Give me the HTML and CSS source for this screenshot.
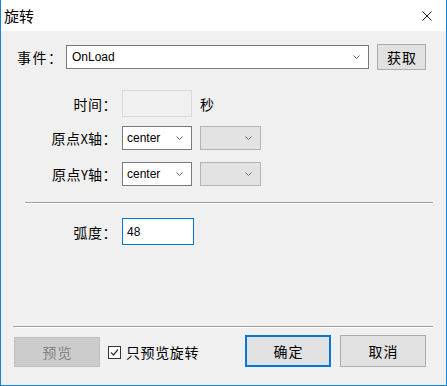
FILE: index.html
```html
<!DOCTYPE html>
<html lang="zh-CN">
<head>
<meta charset="utf-8">
<title>旋转</title>
<link rel="stylesheet" href="styles.css">
</head>
<body>
<div class="window">
  <div class="titlebar">
    <span class="title">旋转</span>
    <svg class="close" width="10" height="10" viewBox="0 0 10 10"><path d="M0.5 0.5L9.5 9.5M9.5 0.5L0.5 9.5" stroke="#1a1a1a" stroke-width="1" fill="none"/></svg>
  </div>
  <div class="content">
    <div class="row-event">
      <span class="lbl-event">事件：</span>
      <div class="combo combo-event">
        <span class="val">OnLoad</span>
        <svg class="chev" width="7" height="4" viewBox="0 0 7 4"><path d="M0.5 0.5L3.5 3.5L6.5 0.5" stroke="#606060" fill="none"/></svg>
      </div>
      <div class="btn btn-fetch">获取</div>
    </div>

    <div class="row row-time">
      <span class="lbl">时间：</span>
      <div class="input input-disabled"></div>
      <span class="unit">秒</span>
    </div>

    <div class="row row-x">
      <span class="lbl">原点<span class="latin">X</span>轴：</span>
      <div class="combo combo-small">
        <span class="val">center</span>
        <svg class="chev" width="7" height="4" viewBox="0 0 7 4"><path d="M0.5 0.5L3.5 3.5L6.5 0.5" stroke="#606060" fill="none"/></svg>
      </div>
      <div class="combo combo-disabled">
        <svg class="chev" width="7" height="4" viewBox="0 0 7 4"><path d="M0.5 0.5L3.5 3.5L6.5 0.5" stroke="#707070" fill="none"/></svg>
      </div>
    </div>

    <div class="row row-y">
      <span class="lbl">原点<span class="latin">Y</span>轴：</span>
      <div class="combo combo-small">
        <span class="val">center</span>
        <svg class="chev" width="7" height="4" viewBox="0 0 7 4"><path d="M0.5 0.5L3.5 3.5L6.5 0.5" stroke="#606060" fill="none"/></svg>
      </div>
      <div class="combo combo-disabled">
        <svg class="chev" width="7" height="4" viewBox="0 0 7 4"><path d="M0.5 0.5L3.5 3.5L6.5 0.5" stroke="#707070" fill="none"/></svg>
      </div>
    </div>

    <div class="sep sep-mid"></div>

    <div class="row row-arc">
      <span class="lbl">弧度：</span>
      <div class="input input-focus"><span class="val">48</span></div>
    </div>

    <div class="sep sep-bottom"></div>

    <div class="row-buttons">
      <div class="btn btn-preview">预览</div>
      <label class="check">
        <svg class="box" width="13" height="13" viewBox="0 0 13 13"><rect x="0.5" y="0.5" width="12" height="12" fill="#fff" stroke="#333"/><path d="M3 6.5L5.5 9L10 3.5" stroke="#333" stroke-width="1.2" fill="none"/></svg>
        <span>只预览旋转</span>
      </label>
      <div class="btn btn-ok">确定</div>
      <div class="btn btn-cancel">取消</div>
    </div>
  </div>
</div>
</body>
</html>
```

FILE: styles.css
```css
html, body {
  margin: 0;
  padding: 0;
}
body {
  font-family: "Noto Sans CJK SC", "Liberation Sans", sans-serif;
  font-size: 14px;
  color: #000;
  background: #fff;
}
.window {
  width: 447px;
  height: 386px;
  box-sizing: border-box;
  border: 1px solid #1883d7;
  border-top: none;
  display: flex;
  flex-direction: column;
  overflow: hidden;
}
.titlebar {
  height: 31px;
  flex: none;
  background: #fff;
  display: flex;
  align-items: center;
  justify-content: space-between;
  padding: 0 14px 0 3px;
}
.title {
  font-size: 15px;
  line-height: 31px;
}
.close {
  display: block;
}
.content {
  flex: 1;
  background: #f0f0f0;
  display: flex;
  flex-direction: column;
}
.row-event {
  margin-top: 13px;
  display: flex;
  align-items: center;
  height: 26px;
}
.lbl-event {
  width: 49px;
  padding-left: 16px;
  box-sizing: content-box;
  white-space: nowrap;
  line-height: 24px;
  letter-spacing: 1.5px;
}
.combo {
  box-sizing: border-box;
  height: 24px;
  border: 1px solid #7a7a7a;
  background: #fff;
  display: flex;
  align-items: center;
  justify-content: space-between;
  padding: 0 8px 0 4px;
  font-family: "Liberation Sans", sans-serif;
  font-size: 12px;
}
.combo-event {
  width: 303px;
  padding-left: 4px;
}
.combo-event .val {
  padding-left: 1px;
}
.chev {
  display: block;
  flex: none;
  margin-left: auto;
}
.btn {
  box-sizing: border-box;
  background: #e1e1e1;
  border: 1px solid #adadad;
  display: flex;
  align-items: center;
  justify-content: center;
  letter-spacing: 1px;
  text-indent: 1px;
}
.btn-fetch {
  width: 49px;
  height: 26px;
  margin-left: 8px;
}
.row {
  display: flex;
  align-items: center;
}
.lbl {
  width: 116px;
  padding-right: 5px;
  text-align: right;
  white-space: nowrap;
  letter-spacing: 0.5px;
}
.lbl .latin {
  font-size: 13px;
  letter-spacing: 0;
}
.row-time {
  margin-top: 20px;
  height: 27px;
}
.input {
  box-sizing: border-box;
  height: 27px;
  width: 70px;
  display: flex;
  align-items: center;
  font-family: "Liberation Sans", sans-serif;
  font-size: 12px;
}
.input-disabled {
  background: #f0f0f0;
  border: 1px solid #d9d9d9;
}
.unit {
  margin-left: 8px;
}
.row-x {
  margin-top: 9px;
  height: 24px;
}
.row-y {
  margin-top: 12px;
  height: 24px;
}
.combo-small {
  width: 70px;
}
.combo-disabled {
  width: 61px;
  margin-left: 8px;
  background: #e3e3e3;
  border-color: #b4b4b4;
}
.sep {
  height: 1px;
  background: #a0a0a0;
  border-bottom: 1px solid #fff;
}
.sep-mid {
  margin: 16px 13px 0 24px;
}
.row-arc {
  margin-top: 14px;
  height: 27px;
}
.input-focus {
  width: 72px;
  background: #fff;
  border: 1px solid #0078d7;
  padding-left: 4px;
}
.sep-bottom {
  margin: auto 13px 0 12px;
}
.row-buttons {
  display: flex;
  align-items: flex-end;
  margin-top: 7px;
  margin-bottom: 18px;
  padding-left: 13px;
}
.btn-preview {
  width: 86px;
  height: 30px;
  background: #cccccc;
  border-color: #bfbfbf;
  color: #838383;
}
.check {
  display: flex;
  align-items: center;
  height: 30px;
  margin-left: 8px;
  width: 137px;
  letter-spacing: 0.6px;
}
.check .box {
  display: block;
  margin-right: 5px;
}
.btn-ok {
  width: 86px;
  height: 32px;
  border: 2px solid #0078d7;
}
.btn-cancel {
  width: 86px;
  height: 32px;
  margin-left: 9px;
}
```
